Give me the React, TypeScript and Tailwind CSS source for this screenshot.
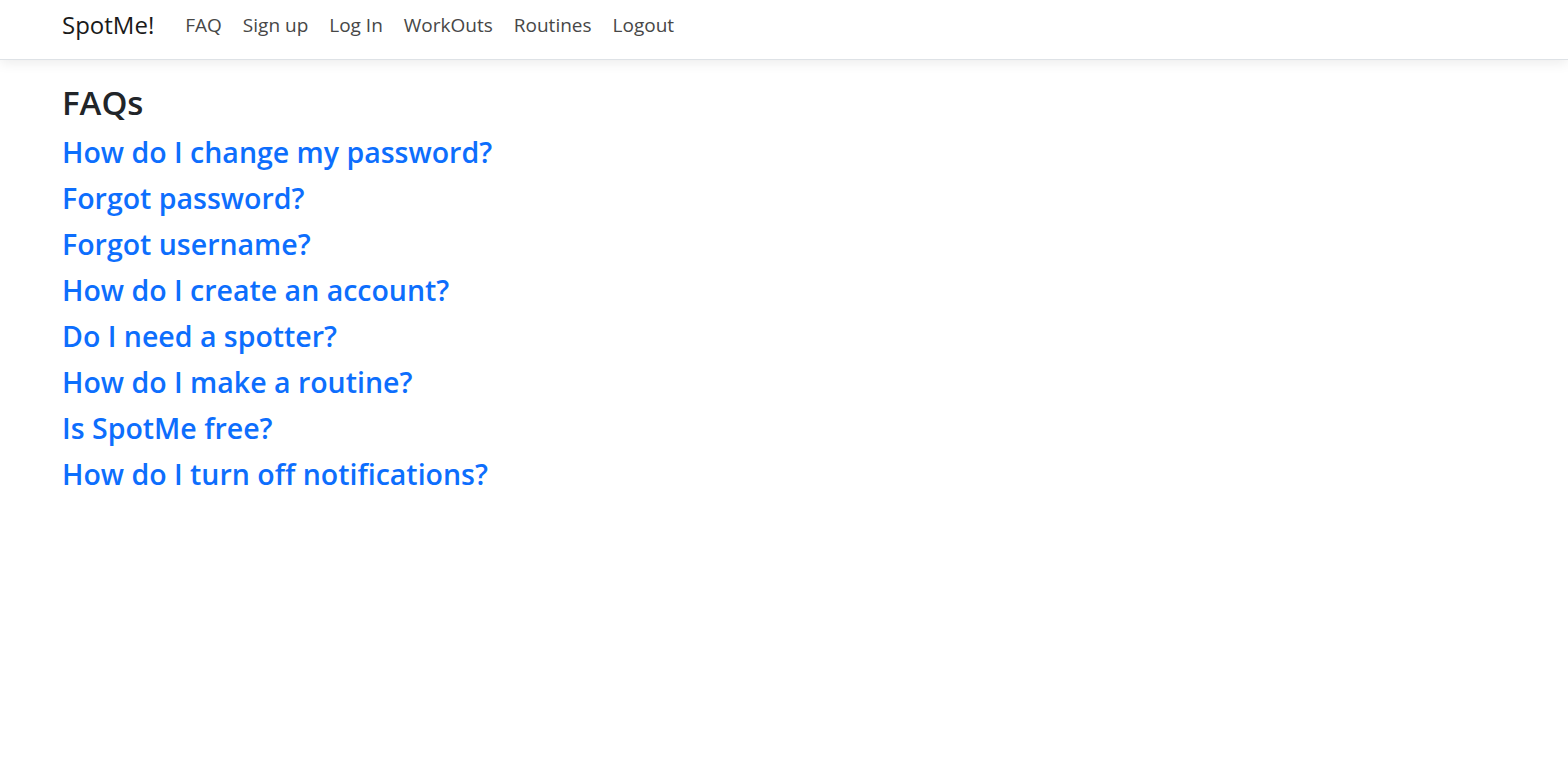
import React from 'react';

const navLinks = ['FAQ', 'Sign up', 'Log In', 'WorkOuts', 'Routines', 'Logout'];

const questions = [
  'How do I change my password?',
  'Forgot password?',
  'Forgot username?',
  'How do I create an account?',
  'Do I need a spotter?',
  'How do I make a routine?',
  'Is SpotMe free?',
  'How do I turn off notifications?',
];

export default function App() {
  return (
    <div className="min-h-screen bg-white font-['Open_Sans',sans-serif]">
      {/* Top navbar */}
      <nav className="h-[60px] border-b border-[#dee2e6] bg-white shadow-[0_3px_12px_rgba(0,0,0,0.08)] relative">
        <div className="flex h-full items-center px-[62px] pb-[9px]">
          <a href="#" className="text-[24px] text-[#1a1a1a] mr-[31px]">
            SpotMe!
          </a>
          <div className="flex items-center gap-[21px]">
            {navLinks.map((item) => (
              <a key={item} href="#" className="text-[19px] text-[#474747]">
                {item}
              </a>
            ))}
          </div>
        </div>
      </nav>

      {/* FAQ list */}
      <main className="px-[62px] pt-[23px]">
        <h2 className="text-[33px] font-semibold text-[#212529] leading-[40px] mb-[6px]">FAQs</h2>
        <div className="flex flex-col">
          {questions.map((q) => (
            <a key={q} href="#" className="text-[28.5px] font-semibold text-[#0d6efd] leading-[46px] w-fit">
              {q}
            </a>
          ))}
        </div>
      </main>
    </div>
  );
}
